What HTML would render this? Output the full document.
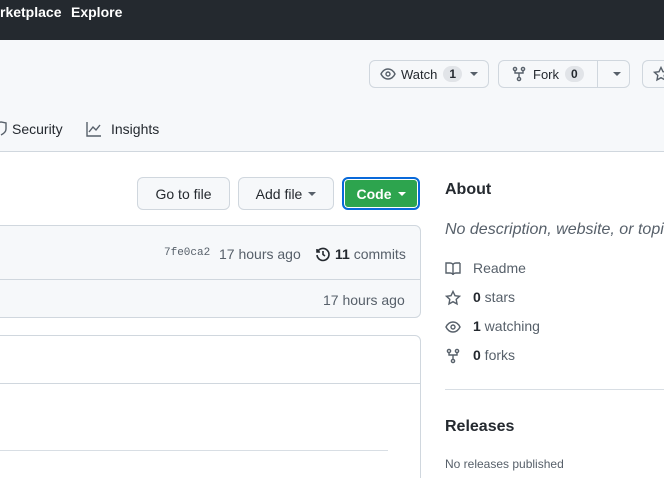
<!DOCTYPE html>
<html style="width:664px;height:478px;overflow:hidden"><head><style>
*{margin:0;padding:0;box-sizing:border-box}
body{width:664px;height:478px;overflow:hidden;position:relative;background:#fff;font-family:"Liberation Sans",sans-serif;color:#24292f;font-size:14px}
.a{position:absolute}
.btn{position:absolute;border:1px solid #d0d7de;border-radius:6px;background:#f6f8fa;font-size:14px;font-weight:600;display:flex;align-items:center;justify-content:center;color:#24292f}
.cnt{display:inline-block;background:#e1e4e8;border-radius:10px;padding:1px 6px;font-size:12px;margin-left:6px;font-weight:600}
svg{fill:none;stroke:#57606a;stroke-width:1.4}
.car{display:inline-block;border-left:4px solid transparent;border-right:4px solid transparent;border-top:4px solid #57606a;margin-left:6px;vertical-align:middle}
</style></head><body>
<div class="a" style="left:0;top:0;width:664px;height:40px;background:#24292f"></div>
<div class="a" style="left:0;top:4px;color:#fff;font-weight:700;font-size:14px;">rketplace</div>
<div class="a" style="left:71px;top:4px;color:#fff;font-weight:700;font-size:14px;">Explore</div>
<div class="a" style="left:0;top:40px;width:664px;height:112px;background:#f6f8fa;border-bottom:1px solid #d0d7de"></div>
<div class="btn" style="left:369px;top:60px;width:120px;height:28px;font-weight:500;font-size:13px">
<svg width="16" height="16" style="margin-right:5px"><path d="M1 8c2-4 5-5 7-5s5 1 7 5c-2 4-5 5-7 5s-5-1-7-5z"/><circle cx="8" cy="8" r="2"/></svg>Watch<span class="cnt">1</span><span class="car" style="margin-left:8px"></span></div>
<div class="btn" style="left:498px;top:60px;width:132px;height:28px;font-weight:500;font-size:13px;justify-content:flex-start;padding-left:12px">
<svg width="16" height="16" style="margin-right:6px"><circle cx="4" cy="3" r="1.6"/><circle cx="12" cy="3" r="1.6"/><circle cx="8" cy="13" r="1.6"/><path d="M4 5v2h8V5M8 7v4"/></svg>Fork<span class="cnt">0</span>
<div class="a" style="left:98px;top:0;height:26px;border-left:1px solid #d0d7de"></div><span class="car a" style="left:108px;top:11px"></span></div>
<div class="btn" style="left:642px;top:60px;width:22px;height:28px;justify-content:flex-start;padding-left:10px;border-right:none;border-radius:6px 0 0 6px;overflow:hidden"><svg width="16" height="16" style="flex:none"><path d="M8 1.5l2 4.2 4.5.6-3.3 3.1.8 4.5L8 11.7 4 13.9l.8-4.5L1.5 6.3 6 5.7z"/></svg></div>
<svg class="a" width="14" height="16" style="left:-6px;top:121px"><path d="M2 2l5-1 5 1v6c0 3-3 5-5 6"/></svg>
<div class="a" style="left:12px;top:121px;font-size:14px">Security</div>
<svg class="a" width="16" height="16" style="left:86px;top:121px"><path d="M1 1v14h14M3 11l4-5 3 3 4-5"/></svg>
<div class="a" style="left:111px;top:121px;font-size:14px">Insights</div>

<div class="btn" style="left:137px;top:177px;width:93px;height:33px;font-weight:500">Go to file</div>
<div class="btn" style="left:238px;top:177px;width:96px;height:33px;font-weight:500">Add file<span class="car"></span></div>
<div class="btn" style="left:342px;top:177px;width:78px;height:33px;background:#2da44e;color:#fff;border:2px solid #0969da;box-shadow:inset 0 0 0 1px #fff">Code<span class="car" style="border-top-color:#fff"></span></div>

<div class="a" style="left:-10px;top:225px;width:431px;height:93px;border:1px solid #d0d7de;border-radius:6px;background:#f6f8fa"></div>
<div class="a" style="left:0;top:279px;width:420px;border-top:1px solid #d0d7de"></div>
<div class="a" style="left:164px;top:247px;font-family:'Liberation Mono',monospace;font-size:11px;color:#57606a">7fe0ca2</div>
<div class="a" style="left:219px;top:246px;color:#57606a;font-size:14px">17 hours ago</div>
<svg class="a" width="16" height="16" style="left:315px;top:246px;stroke:#24292f;stroke-width:1.6"><path d="M2 3v3h3M2.5 6A6 6 0 1 1 2 9"/><path d="M8 5v3.5l2 1.5"/></svg>
<div class="a" style="left:335px;top:246px;font-size:14px;color:#57606a"><b style="color:#24292f">11</b> commits</div>
<div class="a" style="left:323px;top:292px;color:#57606a;font-size:14px">17 hours ago</div>

<div class="a" style="left:-10px;top:335px;width:431px;height:200px;border:1px solid #d0d7de;border-radius:6px"></div>
<div class="a" style="left:0;top:383px;width:420px;border-top:1px solid #d0d7de"></div>
<div class="a" style="left:0;top:450px;width:388px;border-top:1px solid #d8dee4"></div>

<div class="a" style="left:445px;top:181px;font-size:16px;font-weight:600">About</div>
<div class="a" style="left:445px;top:221px;font-size:16px;font-style:italic;color:#57606a;white-space:nowrap">No description, website, or topics provided.</div>
<svg class="a" width="16" height="16" style="left:445px;top:261px"><path d="M1 2h4c2 0 3 1 3 2v10c0-1-1-2-3-2H1zM15 2h-4c-2 0-3 1-3 2M15 2v10h-4c-2 0-3 1-3 2"/></svg>
<div class="a" style="left:473px;top:260px;color:#57606a">Readme</div>
<svg class="a" width="16" height="16" style="left:445px;top:290px"><path d="M8 1.5l2 4.2 4.5.6-3.3 3.1.8 4.5L8 11.7 4 13.9l.8-4.5L1.5 6.3 6 5.7z"/></svg>
<div class="a" style="left:473px;top:289px;color:#57606a"><b style="color:#24292f">0</b> stars</div>
<svg class="a" width="16" height="16" style="left:445px;top:319px"><path d="M1 8c2-4 5-5 7-5s5 1 7 5c-2 4-5 5-7 5s-5-1-7-5z"/><circle cx="8" cy="8" r="2"/></svg>
<div class="a" style="left:473px;top:318px;color:#57606a"><b style="color:#24292f">1</b> watching</div>
<svg class="a" width="16" height="16" style="left:445px;top:348px"><circle cx="4" cy="3" r="1.6"/><circle cx="12" cy="3" r="1.6"/><circle cx="8" cy="13" r="1.6"/><path d="M4 5v2h8V5M8 7v4"/></svg>
<div class="a" style="left:473px;top:347px;color:#57606a"><b style="color:#24292f">0</b> forks</div>
<div class="a" style="left:445px;top:389px;width:219px;border-top:1px solid #d8dee4"></div>
<div class="a" style="left:445px;top:418px;font-size:16px;font-weight:600">Releases</div>
<div class="a" style="left:445px;top:457px;font-size:12px;color:#57606a">No releases published</div>
</body></html>
